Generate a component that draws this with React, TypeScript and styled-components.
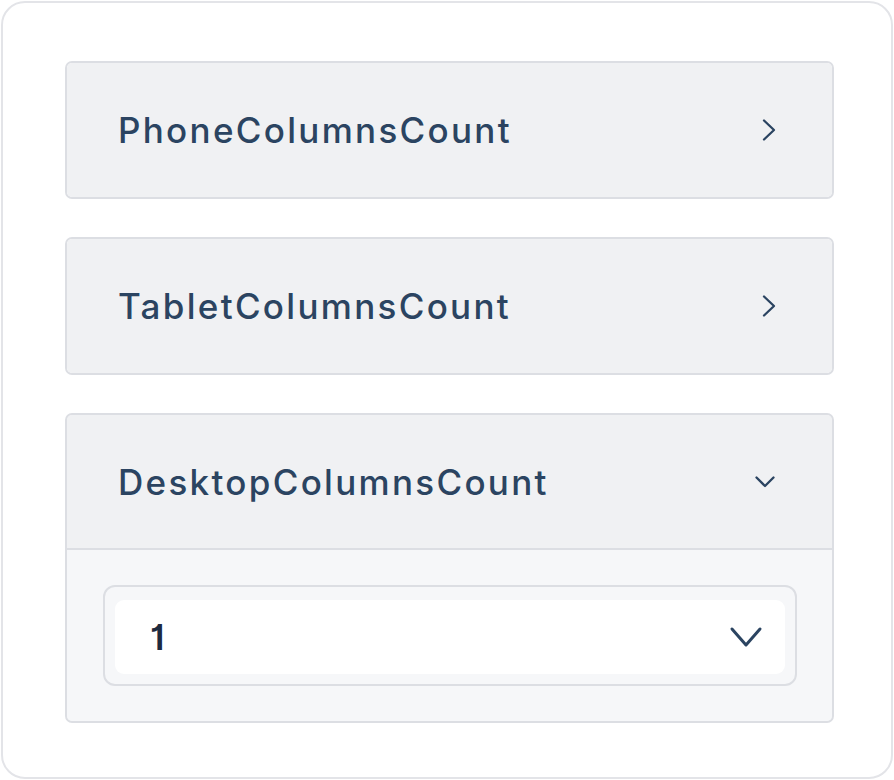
import React, { useState } from "react";
import styled, { createGlobalStyle } from "styled-components";

const Global = createGlobalStyle`
  html, body { margin: 0; padding: 0; background: #ffffff; }
  body { font-family: Inter, "Noto Sans", sans-serif; }
  * { box-sizing: border-box; }
`;

const Page = styled.div`
  width: 894px;
  height: 780px;
  padding: 1px;
`;

const Card = styled.div`
  width: 892px;
  height: 778px;
  border: 2px solid #e3e4e8;
  border-radius: 24px;
  background: #ffffff;
  padding: 58px 57px 0 62px;
  display: flex;
  flex-direction: column;
  gap: 38px;
`;

const Item = styled.div`
  border: 2px solid #dcdee3;
  border-radius: 7px;
  overflow: hidden;
  background: #f0f1f3;
`;

const Header = styled.button<{ $open: boolean }>`
  width: 100%;
  height: ${(p) => (p.$open ? 135 : 134)}px;
  border: none;
  border-bottom: ${(p) => (p.$open ? "2px solid #dcdee3" : "none")};
  background: #f0f1f3;
  display: flex;
  align-items: center;
  justify-content: space-between;
  padding: 0 56px 0 51px;
  cursor: pointer;
  font-family: Inter, "Noto Sans", sans-serif;
  font-size: 35px;
  font-weight: 500;
  letter-spacing: 2.3px;
  color: #2b4461;
`;

const Chevron = styled.svg`
  display: block;
  flex: none;
`;

const Content = styled.div`
  background: #f6f7f9;
  padding: 35px 35px 35px 36px;
`;

const SelectFrame = styled.div`
  border: 2px solid #dcdee3;
  border-radius: 12px;
  padding: 13px 10px 10px 10px;
`;

const SelectBox = styled.div`
  height: 74px;
  background: #ffffff;
  border-radius: 9px;
  display: flex;
  align-items: center;
  justify-content: space-between;
  padding: 0 22px 0 35px;
  font-family: Inter, "Noto Sans", sans-serif;
  font-size: 35px;
  font-weight: 600;
  font-feature-settings: "cv01";
  color: #1d2a3f;
`;

const RightIcon = () => (
  <Chevron width="14" height="24" viewBox="0 0 14 24">
    <path d="M2 2.5 L12 12 L2 21.5" fill="none" stroke="#2b4461" strokeWidth="2.3" strokeLinecap="round" strokeLinejoin="round" />
  </Chevron>
);

const DownIcon = () => (
  <Chevron width="22" height="14" viewBox="0 0 22 14">
    <path d="M2.5 2.5 L11 11 L19.5 2.5" fill="none" stroke="#2b4461" strokeWidth="2.3" strokeLinecap="round" strokeLinejoin="round" />
  </Chevron>
);

const SelectChevron = () => (
  <Chevron width="34" height="22" viewBox="0 0 34 22">
    <path d="M3 3 L17 19 L31 3" fill="none" stroke="#2b4461" strokeWidth="3" strokeLinecap="round" strokeLinejoin="round" />
  </Chevron>
);

const items = ["PhoneColumnsCount", "TabletColumnsCount", "DesktopColumnsCount"];

export default function App() {
  const [open, setOpen] = useState(2);
  return (
    <Page>
      <Global />
      <Card>
        {items.map((name, i) => (
          <Item key={name}>
            <Header $open={open === i} onClick={() => setOpen(open === i ? -1 : i)}>
              <span>{name}</span>
              {open === i ? <DownIcon /> : <RightIcon />}
            </Header>
            {open === i && (
              <Content>
                <SelectFrame>
                  <SelectBox>
                    <span>1</span>
                    <SelectChevron />
                  </SelectBox>
                </SelectFrame>
              </Content>
            )}
          </Item>
        ))}
      </Card>
    </Page>
  );
}
